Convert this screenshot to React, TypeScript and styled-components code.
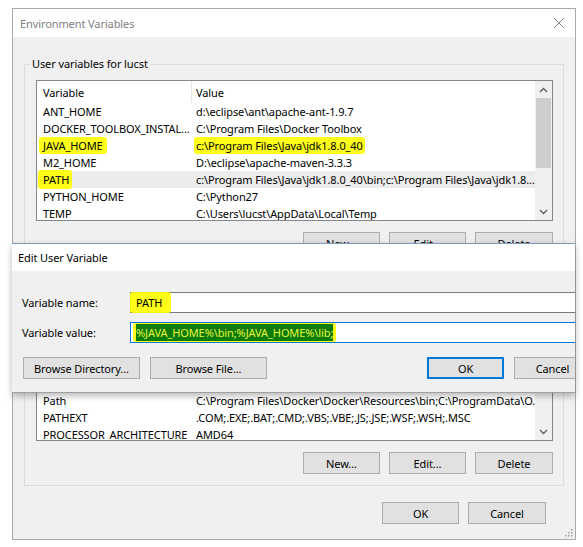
import React from 'react';
import styled, { createGlobalStyle } from 'styled-components';

const GlobalStyle = createGlobalStyle`
  html, body {
    margin: 0;
    padding: 0;
    background: #fff;
  }
  body {
    font-family: "Noto Sans", "Open Sans", sans-serif;
    font-size: 11px;
    letter-spacing: -0.1px;
    color: #000;
  }
  * {
    box-sizing: border-box;
  }
`;

const Screen = styled.div`
  position: relative;
  width: 583px;
  height: 547px;
  overflow: hidden;
  background: #fff;
  padding: 8px 0 0 12px;
`;

const Window = styled.div`
  width: 564px;
  height: 532px;
  border: 1px solid #a9a9a9;
  background: #f0f0f0;
  display: flex;
  flex-direction: column;
`;

const TitleBar = styled.div<{ $height: number; $active?: boolean; $indent: number }>`
  flex: none;
  height: ${p => p.$height}px;
  background: #fff;
  display: flex;
  align-items: center;
  justify-content: space-between;
  padding: 0 10px 0 ${p => p.$indent}px;
  color: ${p => (p.$active ? '#000' : '#808080')};
  white-space: nowrap;
`;

const WindowBody = styled.div`
  flex: 1;
  display: flex;
  flex-direction: column;
  padding: 19px 11px 0 11px;
  position: relative;
`;

const GroupBox = styled.fieldset<{ $gap?: number }>`
  margin: ${p => p.$gap ?? 0}px 0 0 0;
  padding: 8px 10px 11px 11px;
  border: 1px solid #dcdcdc;
  min-width: 0;
`;

const GroupLabel = styled.legend`
  padding: 0 2px;
  margin-left: -6px;
  line-height: 16px;
`;

const ListBox = styled.div<{ $height: number }>`
  height: ${p => p.$height}px;
  border: 1px solid #828790;
  background: #fff;
  display: flex;
`;

const ListContent = styled.div`
  flex: 1;
  min-width: 0;
  overflow: hidden;
  display: flex;
  flex-direction: column;
`;

const HeaderRow = styled.div`
  flex: none;
  height: 22px;
  display: flex;
  align-items: center;
  white-space: nowrap;
`;

const RowsArea = styled.div<{ $bottom?: boolean }>`
  flex: 1;
  min-height: 0;
  display: flex;
  flex-direction: column;
  justify-content: ${p => (p.$bottom ? 'flex-end' : 'flex-start')};
`;

const RowsInner = styled.div<{ $overhang: number }>`
  margin-bottom: -${p => p.$overhang}px;
`;

const Row = styled.div<{ $selected?: boolean }>`
  height: 17px;
  display: flex;
  align-items: center;
  white-space: nowrap;
  background: ${p => (p.$selected ? '#ececec' : 'transparent')};
`;

const NameCell = styled.div<{ $divider?: boolean }>`
  flex: none;
  width: 155px;
  padding-left: 6px;
  align-self: stretch;
  display: flex;
  align-items: center;
  border-right: 1px solid ${p => (p.$divider ? '#e5e5e5' : 'transparent')};
`;

const ValueCell = styled.div`
  flex: 1;
  padding-left: 4px;
`;

const Scrollbar = styled.div`
  flex: none;
  width: 17px;
  background: #f0f0f0;
  display: flex;
  flex-direction: column;
`;

const ScrollArrow = styled.div`
  flex: none;
  height: 17px;
  display: flex;
  align-items: center;
  justify-content: center;
`;

const ScrollThumb = styled.div<{ $size: number }>`
  flex: none;
  height: ${p => p.$size}px;
  margin: 0 1px;
  background: #cdcdcd;
`;

const ScrollTrack = styled.div`
  flex: 1;
`;

const ButtonRow = styled.div<{ $top: number; $right?: number }>`
  display: flex;
  justify-content: flex-end;
  gap: 9px;
  margin-top: ${p => p.$top}px;
  padding-right: ${p => p.$right ?? 0}px;
`;

const PushButton = styled.div<{ $width: number; $default?: boolean; $left?: number }>`
  flex: none;
  width: ${p => p.$width}px;
  height: 22px;
  margin-left: ${p => p.$left ?? 0}px;
  display: flex;
  align-items: center;
  justify-content: center;
  background: #e1e1e1;
  border: 1px solid ${p => (p.$default ? '#0078d7' : '#adadad')};
  box-shadow: ${p => (p.$default ? 'inset 0 0 0 1px #0078d7' : 'none')};
  white-space: nowrap;
`;

const ResizeGrip = styled.svg`
  position: absolute;
  right: 2px;
  bottom: 2px;
`;

const Marker = styled.span<{ $x: number; $y: number; $r?: number }>`
  display: inline-block;
  line-height: 15px;
  background: rgba(255, 255, 0, 0.9);
  padding: ${p => p.$y}px ${p => p.$r ?? p.$x}px ${p => p.$y}px ${p => p.$x}px;
  margin: -${p => p.$y}px -${p => p.$r ?? p.$x}px -${p => p.$y}px -${p => p.$x}px;
  border-radius: 3px;
`;

const Selection = styled.span`
  background: #0b7b0b;
  color: #e9f43c;
  padding: 1px 0;
`;

/* the Edit dialog lies over the Environment Variables window */
const EditDialog = styled.div`
  position: absolute;
  left: 12px;
  top: 243px;
  width: 563px;
  height: 150px;
  overflow: hidden;
  display: flex;
  flex-direction: column;
  border-top: 1px solid #7c9cc4;
  border-bottom: 1px solid #a0a0a0;
  box-shadow: 0 3px 7px rgba(0, 0, 0, 0.28);
`;

const DialogBody = styled.div`
  flex: 1;
  background: #f0f0f0;
  padding: 21px 0 0 10px;
  display: flex;
  flex-direction: column;
  gap: 9px;
`;

const FieldRow = styled.div`
  display: flex;
  align-items: center;
  white-space: nowrap;
`;

const FieldLabel = styled.div`
  flex: none;
  width: 108px;
`;

const TextBox = styled.div<{ $focused?: boolean }>`
  flex: none;
  width: 470px;
  height: 21px;
  background: #fff;
  border: 1px solid ${p => (p.$focused ? '#0078d7' : '#7a7a7a')};
  padding-left: 5px;
  display: flex;
  align-items: center;
`;

const DialogButtons = styled.div`
  display: flex;
  gap: 10px;
  margin-top: 5px;
  padding-left: 1px;
`;

const Chevron: React.FC<{ up?: boolean }> = ({ up }) => (
  <svg width="9" height="6" viewBox="0 0 9 6">
    <path
      d={up ? 'M1 5 L4.5 1.5 L8 5' : 'M1 1 L4.5 4.5 L8 1'}
      fill="none"
      stroke="#606060"
      strokeWidth="1.4"
    />
  </svg>
);

const CloseIcon = () => (
  <svg width="12" height="12" viewBox="0 0 12 12">
    <path d="M1 1 L11 11 M11 1 L1 11" stroke="#8a8a8a" strokeWidth="1" fill="none" />
  </svg>
);

type Variable = { name: React.ReactNode; value: React.ReactNode; selected?: boolean };

const userVars: Variable[] = [
  { name: 'ANT_HOME', value: 'd:\\eclipse\\ant\\apache-ant-1.9.7' },
  { name: 'DOCKER_TOOLBOX_INSTAL...', value: 'C:\\Program Files\\Docker Toolbox' },
  {
    name: <Marker $x={4} $y={1}>JAVA_HOME</Marker>,
    value: <Marker $x={2} $y={1}>c:\Program Files\Java\jdk1.8.0_40</Marker>,
  },
  { name: 'M2_HOME', value: 'D:\\eclipse\\apache-maven-3.3.3' },
  {
    name: <Marker $x={5} $y={2} $r={3}>PATH</Marker>,
    value: 'c:\\Program Files\\Java\\jdk1.8.0_40\\bin;c:\\Program Files\\Java\\jdk1.8....',
    selected: true,
  },
  { name: 'PYTHON_HOME', value: 'C:\\Python27' },
  { name: 'TEMP', value: 'C:\\Users\\lucst\\AppData\\Local\\Temp' },
];

const systemVars: Variable[] = [
  { name: 'ComSpec', value: 'C:\\WINDOWS\\system32\\cmd.exe' },
  { name: 'DriverData', value: 'C:\\Windows\\System32\\Drivers\\DriverData' },
  { name: 'NUMBER_OF_PROCESSORS', value: '4' },
  { name: 'OS', value: 'Windows_NT' },
  { name: 'Path', value: 'C:\\Program Files\\Docker\\Docker\\Resources\\bin;C:\\ProgramData\\O...' },
  { name: 'PATHEXT', value: '.COM;.EXE;.BAT;.CMD;.VBS;.VBE;.JS;.JSE;.WSF;.WSH;.MSC' },
  { name: 'PROCESSOR_ARCHITECTURE', value: 'AMD64' },
];

const VariableList: React.FC<{
  rows: Variable[];
  height: number;
  thumb: number;
  bottom?: boolean;
}> = ({ rows, height, thumb, bottom }) => (
  <ListBox $height={height}>
    <ListContent>
      <HeaderRow>
        <NameCell $divider>Variable</NameCell>
        <ValueCell>Value</ValueCell>
      </HeaderRow>
      <RowsArea $bottom={bottom}>
        <RowsInner $overhang={bottom ? 3 : 0}>
          {rows.map((r, i) => (
            <Row key={i} $selected={r.selected}>
              <NameCell>{r.name}</NameCell>
              <ValueCell>{r.value}</ValueCell>
            </Row>
          ))}
        </RowsInner>
      </RowsArea>
    </ListContent>
    <Scrollbar>
      <ScrollArrow>
        <Chevron up />
      </ScrollArrow>
      <ScrollThumb $size={thumb} />
      <ScrollTrack />
      <ScrollArrow>
        <Chevron />
      </ScrollArrow>
    </Scrollbar>
  </ListBox>
);

const App: React.FC = () => {
  return (
    <>
      <GlobalStyle />
      <Screen>
        <Window>
          <TitleBar $height={28} $indent={7}>
            <span>Environment Variables</span>
            <CloseIcon />
          </TitleBar>
          <WindowBody>
            <GroupBox>
              <GroupLabel>User variables for lucst</GroupLabel>
              <VariableList rows={userVars} height={141} thumb={70} />
              <ButtonRow $top={11}>
                <PushButton $width={77}>New...</PushButton>
                <PushButton $width={77}>Edit...</PushButton>
                <PushButton $width={78}>Delete</PushButton>
              </ButtonRow>
            </GroupBox>
            <GroupBox $gap={2}>
              <GroupLabel>System variables</GroupLabel>
              <VariableList rows={systemVars} height={149} thumb={40} bottom />
              <ButtonRow $top={11}>
                <PushButton $width={77}>New...</PushButton>
                <PushButton $width={77}>Edit...</PushButton>
                <PushButton $width={78}>Delete</PushButton>
              </ButtonRow>
            </GroupBox>
            <ButtonRow $top={16} $right={18}>
              <PushButton $width={77}>OK</PushButton>
              <PushButton $width={78}>Cancel</PushButton>
            </ButtonRow>
            <ResizeGrip width="8" height="8" viewBox="0 0 8 8">
              <rect x="6" y="0" width="1.5" height="1.5" fill="#a0a0a0" />
              <rect x="3" y="3" width="1.5" height="1.5" fill="#a0a0a0" />
              <rect x="6" y="3" width="1.5" height="1.5" fill="#a0a0a0" />
              <rect x="0" y="6" width="1.5" height="1.5" fill="#a0a0a0" />
              <rect x="3" y="6" width="1.5" height="1.5" fill="#a0a0a0" />
              <rect x="6" y="6" width="1.5" height="1.5" fill="#a0a0a0" />
            </ResizeGrip>
          </WindowBody>
        </Window>

        <EditDialog>
          <TitleBar $height={27} $indent={6} $active>
            <span>Edit User Variable</span>
          </TitleBar>
          <DialogBody>
            <FieldRow>
              <FieldLabel>Variable name:</FieldLabel>
              <TextBox>
                <Marker $x={6} $y={3} $r={9}>PATH</Marker>
              </TextBox>
            </FieldRow>
            <FieldRow>
              <FieldLabel>Variable value:</FieldLabel>
              <TextBox $focused>
                <Marker $x={3} $y={2}>
                  <Selection>%JAVA_HOME%\bin;%JAVA_HOME%\lib;</Selection>
                </Marker>
              </TextBox>
            </FieldRow>
            <DialogButtons>
              <PushButton $width={117}>Browse Directory...</PushButton>
              <PushButton $width={117}>Browse File...</PushButton>
              <PushButton $width={77} $default $left={150}>OK</PushButton>
              <PushButton $width={77}>Cancel</PushButton>
            </DialogButtons>
          </DialogBody>
        </EditDialog>
      </Screen>
    </>
  );
};

export default App;
